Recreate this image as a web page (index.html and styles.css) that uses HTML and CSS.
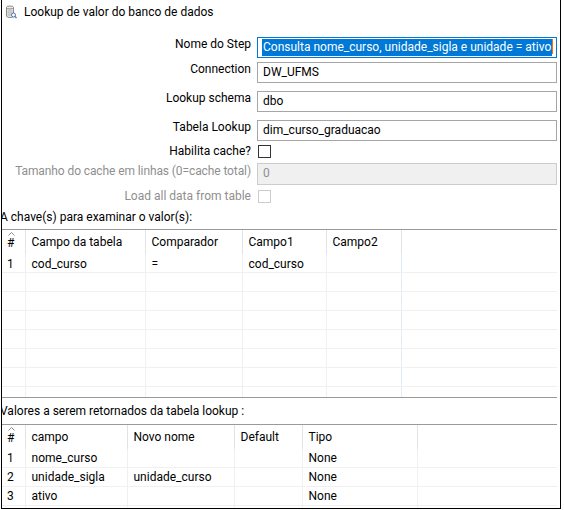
FILE: index.html
```html
<!DOCTYPE html>
<html lang="pt">
<head>
    <meta charset="UTF-8">
    <title>Lookup de valor do banco de dados</title>
    <link rel="stylesheet" href="styles.css">
</head>
<body>
    <div class="dialog">
        <div class="title">
            <svg class="step-icon" width="12" height="14" viewBox="0 0 12 14">
                <path d="M1.5 2.5 Q1.5 1 5 1 Q8.5 1 8.5 2.5 L8.5 11 Q8.5 12.5 5 12.5 Q1.5 12.5 1.5 11 Z" fill="#ececec" stroke="#8a8a8a"/>
                <path d="M1.5 2.5 Q1.5 4 5 4 Q8.5 4 8.5 2.5" fill="none" stroke="#8a8a8a"/>
                <path d="M2.5 6 H7.5 M2.5 8 H7.5 M2.5 10 H6" stroke="#a8a8a8"/>
                <circle cx="8.5" cy="10" r="2" fill="#fff" stroke="#4f78b0"/>
                <path d="M9.9 11.4 L11.5 13" stroke="#4f78b0" stroke-width="1.3"/>
            </svg>
            <span>Lookup de valor do banco de dados</span>
        </div>

        <div class="form">
            <div class="row text-row">
                <label>Nome do Step</label>
                <div class="field focused"><span class="sel">Consulta nome_curso, unidade_sigla e unidade = ativo</span><span class="caret"></span></div>
            </div>
            <div class="row text-row gap-4">
                <label>Connection</label>
                <div class="field">DW_UFMS</div>
            </div>
            <div class="row text-row gap-8">
                <label>Lookup schema</label>
                <div class="field">dbo</div>
            </div>
            <div class="row text-row gap-8">
                <label>Tabela Lookup</label>
                <div class="field">dim_curso_graduacao</div>
            </div>
            <div class="row check-row gap-4">
                <label>Habilita cache?</label>
                <div><span class="checkbox"></span></div>
            </div>
            <div class="row text-row tall gap-5 disabled">
                <label>Tamanho do cache em linhas (0=cache total)</label>
                <div class="field">0</div>
            </div>
            <div class="row check-row gap-5 disabled">
                <label>Load all data from table</label>
                <div><span class="checkbox"></span></div>
            </div>
        </div>

        <div class="section-label first">A chave(s) para examinar o valor(s):</div>
        <div class="grid keys">
            <table>
                <colgroup>
                    <col style="width:23px"><col style="width:120px"><col style="width:97px">
                    <col style="width:84px"><col style="width:75px"><col>
                </colgroup>
                <thead>
                    <tr>
                        <th class="num"><svg class="sort" width="7" height="4" viewBox="0 0 7 4"><path d="M0.5 3.5 L3.5 0.5 L6.5 3.5" fill="none" stroke="#8a8a8a"/></svg>#</th>
                        <th>Campo da tabela</th>
                        <th>Comparador</th>
                        <th>Campo1</th>
                        <th>Campo2</th>
                        <th class="rest"></th>
                    </tr>
                </thead>
                <tbody>
                    <tr><td class="num">1</td><td>cod_curso</td><td>=</td><td>cod_curso</td><td class="last"></td><td class="rest"></td></tr>
                    <tr><td class="num"></td><td></td><td></td><td></td><td class="last"></td><td class="rest"></td></tr>
                    <tr><td class="num"></td><td></td><td></td><td></td><td class="last"></td><td class="rest"></td></tr>
                    <tr><td class="num"></td><td></td><td></td><td></td><td class="last"></td><td class="rest"></td></tr>
                    <tr><td class="num"></td><td></td><td></td><td></td><td class="last"></td><td class="rest"></td></tr>
                    <tr><td class="num"></td><td></td><td></td><td></td><td class="last"></td><td class="rest"></td></tr>
                    <tr><td class="num"></td><td></td><td></td><td></td><td class="last"></td><td class="rest"></td></tr>
                    <tr><td class="num"></td><td></td><td></td><td></td><td class="last"></td><td class="rest"></td></tr>
                </tbody>
            </table>
        </div>

        <div class="section-label second">Valores a serem retornados da tabela lookup :</div>
        <div class="grid values">
            <table>
                <colgroup>
                    <col style="width:23px"><col style="width:102px"><col style="width:107px">
                    <col style="width:68px"><col style="width:115px"><col>
                </colgroup>
                <thead>
                    <tr>
                        <th class="num"><svg class="sort" width="7" height="4" viewBox="0 0 7 4"><path d="M0.5 3.5 L3.5 0.5 L6.5 3.5" fill="none" stroke="#8a8a8a"/></svg>#</th>
                        <th>campo</th>
                        <th>Novo nome</th>
                        <th>Default</th>
                        <th>Tipo</th>
                        <th class="rest"></th>
                    </tr>
                </thead>
                <tbody>
                    <tr><td class="num">1</td><td>nome_curso</td><td></td><td></td><td>None</td><td class="rest"></td></tr>
                    <tr><td class="num">2</td><td>unidade_sigla</td><td>unidade_curso</td><td></td><td>None</td><td class="rest"></td></tr>
                    <tr><td class="num">3</td><td>ativo</td><td></td><td></td><td>None</td><td class="rest"></td></tr>
                    <tr><td class="num"></td><td></td><td></td><td></td><td></td><td class="rest"></td></tr>
                </tbody>
            </table>
        </div>
    </div>
</body>
</html>
```

FILE: styles.css
```css
body {
    margin: 0;
    background-color: #fff;
    font-family: Roboto, "Liberation Sans", sans-serif;
    font-size: 12px;
    color: #000;
}
.dialog {
    margin-left: 1px;
    width: 558px;
    height: 508px;
    border: 1px solid #000;
    border-top: none;
    overflow: hidden;
}
.title {
    display: flex;
    align-items: center;
    height: 24px;
    line-height: 24px;
}
.step-icon {
    margin-left: 3px;
    margin-right: 7px;
}
.form {
    margin-top: 13px;
    margin-right: 3px;
}
.row {
    display: grid;
    grid-template-columns: 249px 1fr;
    column-gap: 6px;
}
.row label {
    text-align: right;
    white-space: nowrap;
}
.gap-4 { margin-top: 4px; }
.gap-5 { margin-top: 5px; }
.gap-8 { margin-top: 8px; }
.text-row {
    height: 21px;
}
.text-row label {
    line-height: 15px;
}
.text-row.tall {
    height: 22px;
}
.text-row.tall label {
    padding-top: 1px;
    letter-spacing: -0.1px;
}
.check-row {
    height: 13px;
}
.check-row label {
    line-height: 13px;
}
.field {
    box-sizing: border-box;
    height: 100%;
    border: 1px solid #a6a6a6;
    padding-left: 5px;
    line-height: 19px;
    white-space: nowrap;
    overflow: hidden;
}
.field.focused {
    border-color: #0078d7;
    padding-left: 4px;
}
.sel {
    background-color: #0078d7;
    color: #fff;
    padding: 1px 1px 2px 1px;
}
.caret {
    display: inline-block;
    width: 1px;
    height: 15px;
    vertical-align: -3px;
    background-color: #e8741c;
}
.checkbox {
    display: block;
    box-sizing: border-box;
    width: 13px;
    height: 13px;
    margin-left: 1px;
    border: 1px solid #333;
    background-color: #fff;
}
.disabled label {
    color: #8f8f8f;
}
.disabled .field {
    background-color: #f0f0f0;
    border-color: #cccccc;
    color: #8f8f8f;
}
.disabled .checkbox {
    border-color: #cccccc;
}
.section-label {
    margin-left: -2px;
    line-height: 16px;
    white-space: nowrap;
}
.section-label.first {
    margin-top: 6px;
}
.section-label.second {
    margin-top: 5px;
}
.grid {
    margin-right: 3px;
    margin-top: 4px;
    border-top: 1px solid #9a9a9a;
    overflow: hidden;
}
.grid.keys {
    height: 167px;
    border-bottom: 1px solid #9a9a9a;
}
.grid.values {
    margin-top: 5px;
    height: 90px;
}
table {
    width: 100%;
    table-layout: fixed;
    border-collapse: collapse;
}
th {
    height: 24px;
    padding: 0 6px;
    font-weight: normal;
    text-align: left;
    white-space: nowrap;
    border-right: 1px solid #e3e3e3;
}
th.num {
    padding: 0 0 0 5px;
    line-height: 13px;
    vertical-align: top;
}
.sort {
    display: block;
    margin: 2px 0 1px 1px;
}
th.rest,
td.rest {
    border-right: none;
}
td {
    height: 18px;
    padding: 0 6px;
    white-space: nowrap;
    border-bottom: 1px solid #f0f0f0;
    border-right: 1px solid #f0f0f0;
}
.keys td {
    height: 17px;
    padding-top: 1px;
}
td.num {
    padding-left: 5px;
}
td.last {
    border-right-color: #e4ecf7;
}
```
